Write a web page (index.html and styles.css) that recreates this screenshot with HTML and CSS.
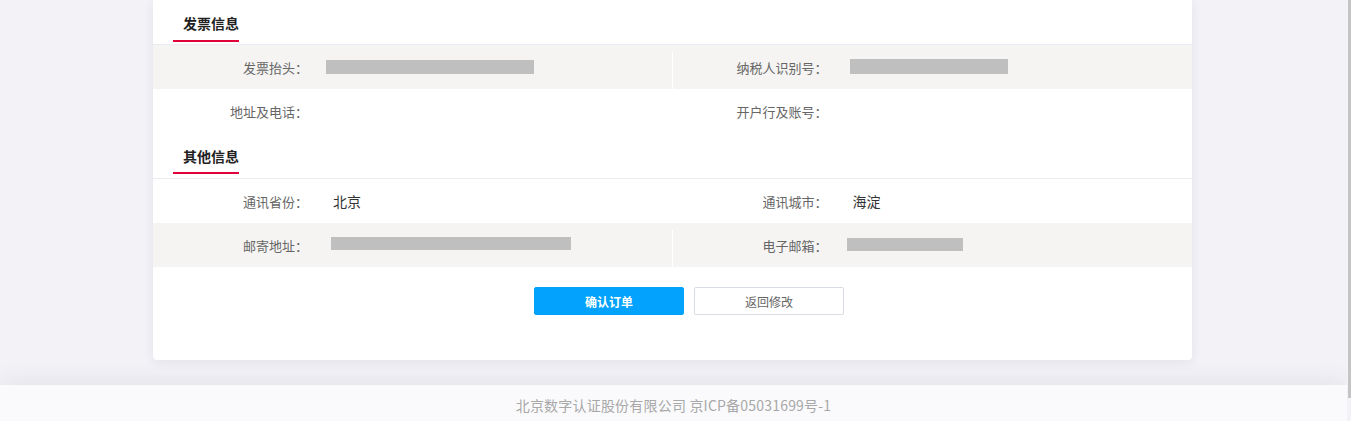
FILE: index.html
```html
<!DOCTYPE html>
<html lang="zh-CN">
<head>
<meta charset="utf-8">
<title>确认订单</title>
<link rel="stylesheet" href="styles.css">
</head>
<body>
<div class="page">
  <main class="main">
    <section class="card">
      <div class="sec-head sec-head-first"><span class="sec-title">发票信息</span></div>
      <div class="row row-gray">
        <div class="cell"><span class="label">发票抬头：</span><span class="value"><span class="mask" style="width:208px"></span></span></div>
        <div class="cell cell-right"><span class="label">纳税人识别号：</span><span class="value"><span class="mask mask-r" style="width:158px"></span></span></div>
      </div>
      <div class="row">
        <div class="cell"><span class="label">地址及电话：</span><span class="value"></span></div>
        <div class="cell cell-right"><span class="label">开户行及账号：</span><span class="value"></span></div>
      </div>
      <div class="sec-head"><span class="sec-title">其他信息</span></div>
      <div class="row">
        <div class="cell"><span class="label">通讯省份：</span><span class="value">北京</span></div>
        <div class="cell cell-right"><span class="label">通讯城市：</span><span class="value">海淀</span></div>
      </div>
      <div class="row row-gray">
        <div class="cell"><span class="label">邮寄地址：</span><span class="value"><span class="mask mask-l2" style="width:240px"></span></span></div>
        <div class="cell cell-right"><span class="label">电子邮箱：</span><span class="value"><span class="mask mask-r2" style="width:116px"></span></span></div>
      </div>
      <div class="actions">
        <button class="btn btn-primary" type="button">确认订单</button>
        <button class="btn btn-default" type="button">返回修改</button>
      </div>
    </section>
  </main>
  <footer class="footer">北京数字认证股份有限公司 京ICP备05031699号-1</footer>
</div>
<div class="scrollbar"><div class="thumb"></div></div>
</body>
</html>
```
FILE: styles.css
```css
* { box-sizing: border-box; }
html, body { margin: 0; padding: 0; height: 100%; }
body {
  display: flex;
  height: 421px;
  overflow: hidden;
  background: #f3f2f7;
  font-family: "Noto Sans CJK SC", "Noto Sans", "Liberation Sans", sans-serif;
  color: #333;
}
.page {
  flex: 1;
  display: flex;
  flex-direction: column;
  height: 421px;
  overflow: hidden;
}
.main {
  height: 385px;
  flex: none;
  overflow: hidden;
  padding-right: 2px;
}
.card {
  width: 1039px;
  margin: 0 auto;
  background: #fff;
  border-radius: 0 0 4px 4px;
  box-shadow: 0 2px 12px rgba(40, 40, 80, 0.08);
  padding-bottom: 45px;
}
.sec-head {
  height: 46px;
  border-bottom: 1px solid #ebebf1;
  display: flex;
  align-items: flex-end;
}
.sec-head-first {
  height: 45px;
}
.sec-title {
  margin: 0 0 4px 20px;
  padding: 0 0 6px 10px;
  line-height: 20px;
  font-size: 14px;
  font-weight: bold;
  color: #222;
  border-bottom: 2px solid #e2003b;
}
.sec-head-first .sec-title {
  margin-bottom: 2px;
  padding-bottom: 7px;
}
.row {
  display: flex;
  height: 44px;
}
.row-gray { background: #f5f4f2; }
.cell {
  flex: 1;
  display: flex;
  align-items: center;
  position: relative;
}
.row-gray .cell-right::before {
  content: "";
  position: absolute;
  left: -1px;
  top: 7px;
  bottom: 0;
  width: 1px;
  background: #fff;
}
.label {
  width: 155px;
  text-align: right;
  font-size: 13px;
  color: #666;
}
.value {
  padding-left: 25px;
  font-size: 14px;
  color: #333;
  display: flex;
  align-items: center;
}
.mask {
  display: block;
  height: 14px;
  background: #bfbfbf;
  margin-left: -7px;
  margin-top: -1px;
}
.mask-r { margin-left: -3px; margin-top: -2px; height: 15px; }
.mask-l2 { margin-left: -2px; margin-top: -4px; height: 13px; }
.mask-r2 { margin-left: -6px; margin-top: -2px; height: 13px; }
.actions {
  display: flex;
  justify-content: center;
  gap: 10px;
  margin-top: 20px;
  padding-left: 33px;
}
.btn {
  width: 150px;
  height: 28px;
  border-radius: 2px;
  font-family: inherit;
  font-size: 12px;
  cursor: pointer;
  padding: 0;
}
.btn-primary {
  background: #03a3fd;
  border: 1px solid #03a3fd;
  color: #fff;
  font-weight: bold;
}
.btn-default {
  background: #fff;
  border: 1px solid #d8dce3;
  color: #666;
}
.footer {
  flex: none;
  height: 50px;
  background: #fafafc;
  box-shadow: 0 -6px 22px rgba(60, 60, 100, 0.07);
  text-align: center;
  padding-top: 11px;
  line-height: 18px;
  font-size: 14px;
  letter-spacing: 0.2px;
  color: #a8a8a8;
}
.scrollbar {
  width: 4px;
  flex: none;
  background: #f3f2f7;
}
.thumb {
  margin-left: 1px;
  width: 3px;
  height: 398px;
  background: #c4c4c4;
}
```
